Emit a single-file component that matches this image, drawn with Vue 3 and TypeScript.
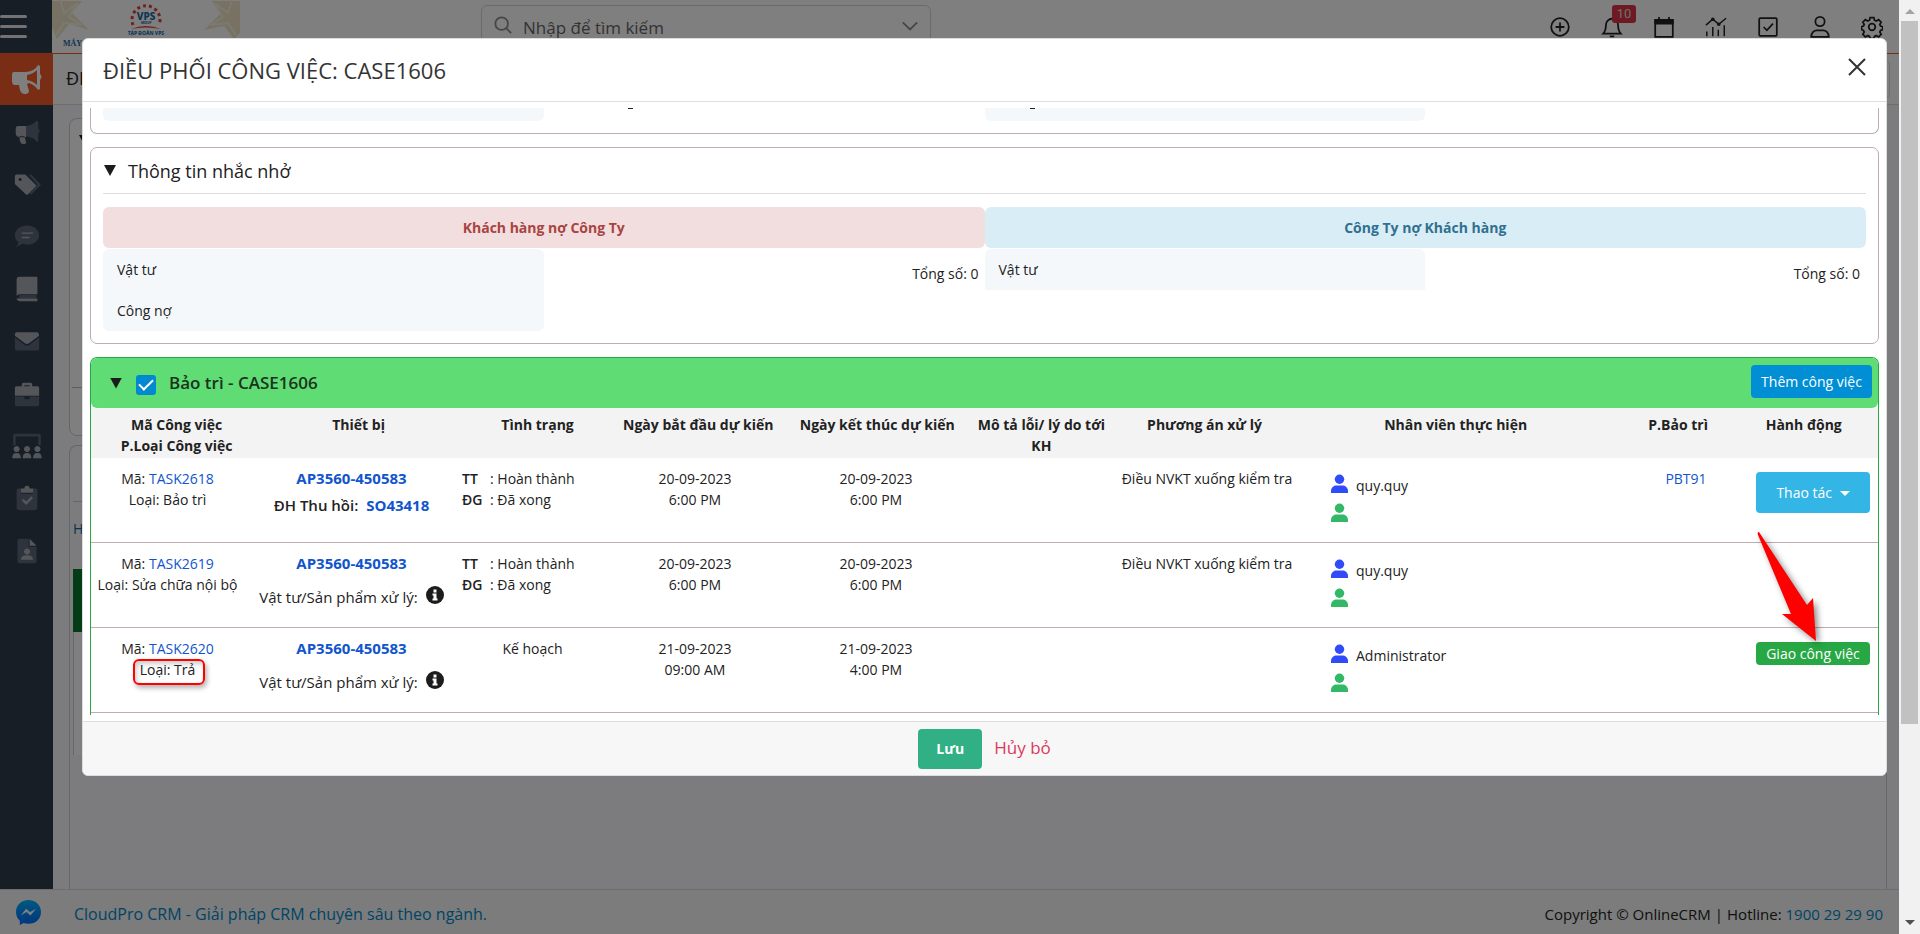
<script setup lang="ts">
import { ref } from 'vue'

interface Task {
  code: string
  kind: string
  device: string
  recall?: string
  state: string
  rated?: string
  start: string[]
  end: string[]
  plan: string
  staff: string
  slip?: string
  action?: 'menu' | 'assign'
}

const tasks: Task[] = [
  { code: 'TASK2618', kind: 'Bảo trì', device: 'AP3560-450583', recall: 'SO43418', state: 'Hoàn thành', rated: 'Đã xong', start: ['20-09-2023', '6:00 PM'], end: ['20-09-2023', '6:00 PM'], plan: 'Điều NVKT xuống kiểm tra', staff: 'quy.quy', slip: 'PBT91', action: 'menu' },
  { code: 'TASK2619', kind: 'Sửa chữa nội bộ', device: 'AP3560-450583', state: 'Hoàn thành', rated: 'Đã xong', start: ['20-09-2023', '6:00 PM'], end: ['20-09-2023', '6:00 PM'], plan: 'Điều NVKT xuống kiểm tra', staff: 'quy.quy' },
  { code: 'TASK2620', kind: 'Trả', device: 'AP3560-450583', state: 'Kế hoạch', start: ['21-09-2023', '09:00 AM'], end: ['21-09-2023', '4:00 PM'], plan: '', staff: 'Administrator', action: 'assign' },
]

const heads = ['Mã Công việc P.Loại Công việc', 'Thiết bị', 'Tình trạng', 'Ngày bắt đầu dự kiến', 'Ngày kết thúc dự kiến', 'Mô tả lỗi/ lý do tới KH', 'Phương án xử lý', 'Nhân viên thực hiện', 'P.Bảo trì', 'Hành động']

/* Two-tone glyphs: "a" is the bright layer, "b" the dim one. */
const navIcons = [
  { name: 'Chiến dịch', a: 'M4 8h10v13H7a5 5 0 0 1-5-3v-7q0-3 2-3zM6 20h6l2 7q0 2-3 2-3 0-4-3z', b: 'M14 8q8-1 12-6 2 0 2 2v7q3 2 0 6v9q-1 1-2 0-4-5-12-6z' },
  { name: 'Nhãn', a: 'M1 6q0-2 2-2h10l12 12q1 1 0 2l-9 9q-1 1-2 0L1 15zM7 8a1.800 1.800 0 1 0 .1 0z', b: 'M17 4h3l11 12-11 11-2-1 9-10z' },
  { name: 'Trao đổi', a: 'M9 11h13v1.500H9zM9 16h9v1.500H9z', b: 'M15 3c8 0 14 5 14 11s-6 11-14 11l-5-1-8 4q3-3 3-6c-3-2-4-5-4-8C1 8 7 3 15 3z' },
  { name: 'Tài liệu', a: 'M6 1h20q1 0 1 1v19H7q-4 0-4 3V5q0-4 3-4zM7 26h20v3H7q-4 0-4-4 0 1 4 1z', b: 'M6 22h20v4H6z' },
  { name: 'Thư', a: 'M3 5h24q2 1 2 4L17 18q-2 1-4 0L1 9q0-4 2-4z', b: 'M1 11l12 9q2 1 4 0l12-9v13q0 2-2 2H3q-2 0-2-2z' },
  { name: 'Công việc', a: 'M9 6V4q0-2 2-2h8q2 0 2 2v2h6q2 0 2 2v9H1V8q0-2 2-2zM12 6h6V5h-6z', b: 'M1 18h11v3h6v-3h11v9q0 2-2 2H3q-2 0-2-2z' },
  { name: 'Nhóm', a: 'M3 15a3.500 3.500 0 1 0 .1 0zM15 15a3.500 3.500 0 1 0 .1 0zM27 15a3.500 3.500 0 1 0 .1 0zM-2 29q0-6 5-6t5 6zM10 29q0-6 5-6t5 6zM22 29q0-6 5-6t5 6z', b: 'M-1 14V3q0-2 2-2h28q2 0 2 2v11h-3V4H2v10z' },
  { name: 'Kiểm tra', a: 'M8 9V4h4a3 3 0 0 1 6 0h4v5zM9 18l2-2 3 3 6-6 2 2-8 8z', b: 'M5 4h3v6h14V4h3q2 0 2 2v20q0 3-3 3H6q-3 0-3-3V6q0-2 2-2z' },
  { name: 'Hồ sơ', a: 'M18 1l8 8h-8zM15 12a3.500 3.500 0 1 0 .1 0zM8 25q0-5 7-5t7 5z', b: 'M6 1h11v9h9v17q0 2-2 2H6q-2 0-2-2V3q0-2 2-2z' },
]

const checked = ref(true)
const keyword = ref('')
</script>

<template>
  <div class="shell">
    <div class="page">
      <header class="topbar">
        <button class="burger" aria-label="Menu"><i></i><i></i><i></i></button>
        <svg class="logo" viewBox="0 0 188 52" aria-label="VPS Group">
          <rect width="188" height="52" fill="#fff" />
          <g fill="#eee5c8">
            <path d="M0 1h30L20 13l17 17-20-6-12 15-5-12z" />
            <path d="M188 1h-28l8 13-16 16 20-4 10 13 6-6z" />
          </g>
          <path d="M8 0l4 13 14-10-9 14 12 8-17-2-8 12" fill="none" stroke="#f8f3e2" stroke-width="2" />
          <path d="M180 0l-4 13-14-10 9 14-12 8 17-2 8 12" fill="none" stroke="#f8f3e2" stroke-width="2" />
          <path d="M81 25a14 14 0 1 1 26 0" fill="none" stroke="#d8424a" stroke-width="3" stroke-dasharray="3 3" />
          <text x="94" y="20" class="l-vps">VPS</text>
          <text x="94" y="24" class="l-tiny">GROUP</text>
          <path d="M79 29q15-6 30 0-15-3-30 0z" fill="#e04040" />
          <text x="94" y="35" class="l-sub">TẬP ĐOÀN VPS</text>
          <text x="11" y="46" class="l-may">MÁY</text>
        </svg>
        <label class="search">
          <svg viewBox="0 0 20 20"><circle cx="8.500" cy="8.500" r="7" /><path d="M13.500 13.500l5.500 5.500" /></svg>
          <input v-model="keyword" type="text" placeholder="Nhập để tìm kiếm" aria-label="Tìm kiếm" />
          <svg viewBox="0 0 20 20"><path d="M2 7l8 8 8-8" /></svg>
        </label>
        <nav class="tools" aria-label="Công cụ">
          <button aria-label="Thêm"><svg viewBox="0 0 20 20"><circle cx="10" cy="10" r="8" /><path d="M10 6v8M6 10h8" /></svg></button>
          <button aria-label="Thông báo"><svg viewBox="0 0 20 20"><path d="M2 16c2-2 2.500-4 2.500-8a5.500 5.500 0 0 1 11 0c0 4 .5 6 2.500 8zM8 18.500h4" /></svg><b class="badge">10</b></button>
          <button aria-label="Lịch"><svg viewBox="0 0 20 20"><path d="M2 3.500h16v15.500H2zM5.500 1v3M14.500 1v3" /><path d="M2 3.500h16V7H2z" fill="#222" /></svg></button>
          <button aria-label="Báo cáo"><svg viewBox="0 0 24 22"><path d="M2 21v-5M8.500 21V11M14.500 21v-7M21 21V9M1 9l7.500-6.500L15 8l8-6.500" /><circle cx="8.500" cy="2.500" r="1.200" /><circle cx="15" cy="8" r="1.200" /></svg></button>
          <button aria-label="Công việc"><svg viewBox="0 0 20 20"><rect x="2" y="2" width="16" height="16" rx="1" /><path d="M6 10l3 3 5.500-6" /></svg></button>
          <button aria-label="Tài khoản"><svg viewBox="0 0 20 20"><circle cx="10" cy="5" r="4.200" /><path d="M2 19c0-4 3-6 5-6h6c2 0 5 2 5 6z" /></svg></button>
          <button aria-label="Cài đặt"><svg viewBox="0 0 20 20"><circle cx="10" cy="10" r="3" /><path d="M8.300 1.500h3.400l.6 2.300 1.500.7 2.200-1.200 2.300 2.300-1.200 2.200.7 1.400 1.900.6v2.600l-1.900.7-.7 1.500 1.200 2.100-2.300 2.300-2.200-1.200-1.500.7-.6 2H8.300l-.6-2-1.500-.7L4 19l-2.300-2.300 1.200-2.100-.7-1.500-1.700-.7V9.800l1.700-.6.7-1.400-1.200-2.200L4 3.300l2.200 1.200 1.500-.7z" /></svg></button>
        </nav>
      </header>

      <div class="middle">
        <nav class="sidebar" aria-label="Mục chính">
          <div class="navlist">
            <a href="#" class="on" aria-label="Tiếp thị">
              <svg viewBox="0 0 32 32"><path d="M3 9h12q9-1 12-7l2 1v8q3 2 0 6v9l-2 1q-3-5-9-7l-2 1 2 7q0 3-4 3-4 0-5-4l-1-5H3q-2-1-2-4v-6q0-3 2-3z" fill="#fff" /><path d="M26 7v15q-4-4-10-5v-5q6-1 10-5z" fill="#f15a29" /></svg>
            </a>
            <a v-for="n in navIcons" :key="n.name" href="#" :aria-label="n.name">
              <svg viewBox="-2 0 34 30"><path :d="n.b" fill="#5c677a" /><path :d="n.a" fill="#a8adb5" fill-rule="evenodd" /></svg>
            </a>
          </div>
        </nav>
        <main class="content">
          <div class="titlebar"><span>ĐI</span><i></i></div>
          <section class="card first"><span class="caret"></span><div class="foot"></div></section>
          <section class="card second">
            <div class="strip"></div>
            <a href="#">H</a>
            <div class="greenbar"></div>
            <div class="blank"></div>
          </section>
        </main>
      </div>

      <footer class="pagefoot">
        <svg viewBox="0 0 26 26"><defs><linearGradient id="mg" x1="0" y1="0" x2="0" y2="1"><stop offset="0" stop-color="#00b2ff" /><stop offset="1" stop-color="#006aff" /></linearGradient></defs><path d="M13 0C5.500 0 0 5.400 0 12.500c0 3.700 1.500 6.900 4 9.100V26l3.800-2.100c1.600.5 3.400.8 5.200.8 7.500 0 13-5.200 13-12.300S20.500 0 13 0z" fill="url(#mg)" /><path d="M5 16l5.500-7 4 3.500L21 9l-6 7-4-3.500z" fill="#fff" /></svg>
        <a href="#" class="product">CloudPro CRM - Giải pháp CRM chuyên sâu theo ngành.</a>
        <p>Copyright © OnlineCRM<span>|</span>Hotline: <a href="#">1900 29 29 90</a></p>
      </footer>

      <div class="overlay">
        <div class="modal" role="dialog" aria-labelledby="dlg-title">
          <header class="m-head">
            <h1 id="dlg-title">ĐIỀU PHỐI CÔNG VIỆC: CASE1606</h1>
            <button aria-label="Đóng"><svg viewBox="0 0 16 16"><path d="M0 0l16 16M16 0L0 16" /></svg></button>
          </header>

          <div class="m-body">
            <section class="panel clipped">
              <div class="fields"><div class="tint"></div><div class="rest"><i></i></div></div>
              <div class="fields"><div class="tint"><i></i></div><div class="rest"></div></div>
            </section>

            <section class="panel remind">
              <h2><span class="caret"></span>Thông tin nhắc nhở</h2>
              <div class="debts">
                <div class="debt">
                  <h3 class="red">Khách hàng nợ Công Ty</h3>
                  <div class="pair"><span class="name top">Vật tư</span><span class="sum">Tổng số: 0</span></div>
                  <div class="pair"><span class="name bottom">Công nợ</span><span class="sum"></span></div>
                </div>
                <div class="debt">
                  <h3 class="blue">Công Ty nợ Khách hàng</h3>
                  <div class="pair"><span class="name top">Vật tư</span><span class="sum">Tổng số: 0</span></div>
                </div>
              </div>
            </section>

            <section class="panel job">
              <div class="bar">
                <span class="caret"></span>
                <input id="case" v-model="checked" type="checkbox" />
                <label for="case">Bảo trì - CASE1606</label>
                <button class="add">Thêm công việc</button>
              </div>
              <table>
                <thead>
                  <tr><th v-for="h in heads" :key="h" scope="col">{{ h }}</th></tr>
                </thead>
                <tbody>
                  <tr v-for="t in tasks" :key="t.code">
                    <td>
                      <div>Mã: <a href="#">{{ t.code }}</a></div>
                      <div :class="{ marked: t.kind === 'Trả' }">Loại: {{ t.kind }}</div>
                    </td>
                    <td class="device">
                      <a href="#">{{ t.device }}</a>
                      <div v-if="t.recall" class="recall">ĐH Thu hồi: <a href="#">{{ t.recall }}</a></div>
                      <div v-else class="parts">Vật tư/Sản phẩm xử lý:
                        <svg viewBox="0 0 18 18"><circle cx="9" cy="9" r="9" /><path d="M7.500 3.500h3v3h-3zM6.500 7.500h4v5h1v2h-5v-2h1v-3h-1z" fill="#fff" /></svg>
                      </div>
                    </td>
                    <td>
                      <dl v-if="t.rated"><dt>TT</dt><dd>: {{ t.state }}</dd><dt>ĐG</dt><dd>: {{ t.rated }}</dd></dl>
                      <template v-else>{{ t.state }}</template>
                    </td>
                    <td><div v-for="s in t.start" :key="s">{{ s }}</div></td>
                    <td><div v-for="s in t.end" :key="s">{{ s }}</div></td>
                    <td></td>
                    <td>{{ t.plan }}</td>
                    <td class="staff">
                      <div><svg viewBox="0 0 18 20" class="lead"><circle cx="9" cy="5.500" r="5" /><path d="M0 20v-2c0-4 3-6 6-6h6c3 0 6 2 6 6v2z" /></svg>{{ t.staff }}</div>
                      <div><svg viewBox="0 0 18 20" class="mate"><circle cx="9" cy="5.500" r="5" /><path d="M0 20v-2c0-4 3-6 6-6h6c3 0 6 2 6 6v2z" /></svg></div>
                    </td>
                    <td class="slip"><a v-if="t.slip" href="#">{{ t.slip }}</a></td>
                    <td class="act">
                      <button v-if="t.action === 'menu'" class="menu">Thao tác <i></i></button>
                      <button v-if="t.action === 'assign'" class="assign">Giao công việc</button>
                      <svg v-if="t.action === 'assign'" class="arrow" viewBox="0 0 66 114"><path d="M3 1q-2 0-1 3l33 79-9 0 34 27-3-43-6 7z" /></svg>
                    </td>
                  </tr>
                </tbody>
              </table>
            </section>
          </div>

          <footer class="m-foot">
            <button class="save">Lưu</button>
            <a href="#">Hủy bỏ</a>
          </footer>
        </div>
      </div>
    </div>

    <div class="scroll" aria-hidden="true"><i class="up"></i><b></b><i class="down"></i></div>
  </div>
</template>

<style>
body { margin: 0; overflow: hidden; }
</style>

<style scoped>
.shell { display: flex; height: 100vh; font: 14px/21px "Open Sans", "Noto Sans", sans-serif; color: #222; }
.shell * { box-sizing: border-box; }
button { font: inherit; border: 0; background: none; padding: 0; }
a { text-decoration: none; color: #1155cc; }
h1, h2, h3, p, dl, dd { margin: 0; }
svg { display: block; flex: none; }
.caret { width: 12px; height: 11px; background: #1c1c1c; clip-path: polygon(0 0, 100% 0, 50% 100%); flex: none; }

.page { flex: 1; min-width: 0; display: flex; flex-direction: column; position: relative; background: #f8f9fc; }

.topbar { height: 54px; display: flex; background: #fff; border-bottom: 1px solid #f15a29; flex: none; }
.burger { width: 52px; background: #2e3c4d; display: flex; flex-direction: column; gap: 7px; padding: 15px 25px 0 0; align-items: stretch; }
.burger i { height: 3px; border-radius: 2px; background: #e6e6ea; }
.logo { width: 188px; height: 52px; }
.logo text { font-family: "Noto Sans", sans-serif; font-weight: 800; fill: #1c6aa8; text-anchor: middle; }
.logo .l-vps { font-size: 10px; }
.logo .l-tiny { font-size: 3px; }
.logo .l-sub { font-size: 5px; }
.logo .l-may { font: bold 8px "Liberation Serif", serif; text-anchor: start; }
.search { width: 450px; height: 44px; margin: 5px 0 0 241px; border: 1px solid #d5d5d5; border-radius: 6px; display: flex; align-items: flex-start; padding: 10px 11px 0 12px; gap: 11px; }
.search svg { width: 18px; height: 18px; fill: none; stroke: #8c8c8c; stroke-width: 2; }
.search input { flex: 1; min-width: 0; border: 0; background: none; padding: 0; height: 23px; font: 17px/23px "Open Sans", sans-serif; outline: 0; }
.search input::placeholder { color: #666; opacity: 1; }
.tools { margin-left: auto; display: flex; padding: 16px 16px 0 0; gap: 30px; }
.tools button { width: 22px; height: 22px; position: relative; }
.tools svg { width: 22px; height: 22px; fill: none; stroke: #222; stroke-width: 1.6; }
.badge { position: absolute; left: 11px; top: -11px; width: 24px; height: 18px; border-radius: 3px; background: #dc3545; color: #ddd; font: 13px/18px Roboto, sans-serif; }

.middle { flex: 1; display: flex; min-height: 0; }
.sidebar { width: 53px; margin-top: -1px; background: #2e3c4d; flex: none; }
.navlist { height: 524px; display: grid; grid-template-rows: repeat(10, 1fr); }
.sidebar a { display: grid; place-items: center; }
.sidebar svg { width: 30px; height: 26px; }
.sidebar .on { background: #f15a29; }
.sidebar .on svg { width: 32px; height: 32px; }
.content { flex: 1; display: flex; flex-direction: column; }
.titlebar { height: 51px; flex: none; background: #fff; border-bottom: 1px solid #ddd; padding: 6px 9px 0 13px; display: flex; font: 18px/36px "Open Sans", sans-serif; }
.titlebar i { margin-left: auto; width: 60px; height: 38px; border: 1px solid #ddd; border-radius: 4px; }
.card { margin: 0 12px 9px 16px; border: 1px solid #ccc; border-radius: 8px; }
.first { margin-top: 13px; height: 318px; background: #fff; padding: 16px 2px 0; display: flex; flex-direction: column; flex: none; }
.first .caret { margin-left: 7px; }
.first .foot { margin-top: auto; height: 48px; border-top: 1px solid #bbb; }
.second { flex: 1; margin-bottom: 0; border-bottom: 0; border-radius: 8px 8px 0 0; padding: 0 3px; }
.second .strip { height: 56px; border-bottom: 1px solid #ccc; }
.second a { display: block; line-height: 20px; padding: 17px 0 16px; color: #0a6aa1; }
.greenbar { height: 63px; margin-top: 14px; background: #087a2a; }
.blank { height: 123px; border-left: 1px solid #ccc; background: #fff; }

.pagefoot { height: 45px; flex: none; border-top: 1px solid #d8dad8; background: #f7f9f7; display: flex; align-items: center; padding: 4px 16px 0; font-size: 15px; }
.pagefoot svg { width: 25px; height: 25px; margin-right: 33px; margin-bottom: 4px; }
.pagefoot a { color: #0088cc; }
.pagefoot .product { font-size: 16px; }
.pagefoot p { margin-left: auto; }
.pagefoot span { padding: 0 4px; }

.overlay { position: absolute; inset: 0; background: rgba(0, 0, 0, 0.5); padding: 38px 12px 0 82px; }
.modal { background: #fff; border: 1px solid #ddd; border-radius: 6px; overflow: hidden; }
.m-head { height: 63px; border-bottom: 1px solid #ddd; display: flex; align-items: center; justify-content: space-between; padding: 0 21px 0 20px; }
.m-head h1 { font-size: 22px; line-height: 28px; font-weight: 400; color: #333; }
.m-head svg { width: 16px; height: 16px; fill: none; stroke: #333; stroke-width: 2; overflow: visible; }
.m-head button { margin-bottom: 6px; }
.m-body { padding: 6px 7px; display: flex; flex-direction: column; gap: 13px; }
.panel { border: 1px solid #bfabb0; border-radius: 7px; }
.clipped { height: 26px; border-top: 0; border-radius: 0 0 7px 7px; padding: 0 12px; display: flex; }
.fields { flex: 1; display: flex; height: 13px; }
.fields > div { flex: 1; }
.fields i { display: block; width: 5px; height: 1px; background: #222; margin-left: 84px; }
.tint { background: #f4f8fb; border-radius: 0 0 6px 6px; }
.fields .tint i { margin-left: 45px; }

.remind { padding: 0 12px 12px; }
.remind h2 { height: 46px; border-bottom: 1px solid #ddd; display: flex; align-items: center; gap: 12px; font-size: 18px; line-height: 24px; font-weight: 400; margin-bottom: 13px; padding-left: 1px; color: #222; }
.debts { display: flex; }
.debt { flex: 1; }
.debt h3 { height: 41px; border-radius: 6px; text-align: center; font-size: 14px; line-height: 41px; font-weight: 700; margin-bottom: 1px; }
.red { background: #f2dede; color: #a94442; }
.blue { background: #d9edf7; color: #31708f; }
.pair { display: flex; }
.pair > span { width: 50%; height: 41px; line-height: 41px; }
.pair .name { background: #f4f8fb; padding-left: 14px; }
.pair .top { border-radius: 6px 6px 0 0; }
.pair .bottom { border-radius: 0 0 6px 6px; }
.pair .sum { text-align: right; padding: 4px 6px 0 0; }

.job { border-color: #28a745; border-bottom: 0; border-radius: 7px 7px 0 0; padding-bottom: 2px; }
.bar { height: 50px; background: #5fdc74; border-radius: 6px; display: flex; align-items: center; padding: 0 6px 0 19px; color: #1b331e; }
.bar input { appearance: none; width: 20px; height: 20px; border-radius: 3px; margin: 3px 13px 0 14px; background: #0088d0; display: grid; place-items: center; }
.bar input:checked::after { content: ""; width: 6px; height: 12px; border: solid #fff; border-width: 0 2px 2px 0; transform: rotate(45deg); margin-bottom: 3px; }
.bar label { font-size: 17px; line-height: 24px; font-weight: 600; }
.add { margin: 0 0 3px auto; width: 121px; height: 33px; border-radius: 4px; background: #008fd5; color: #fff; }

table { display: block; }
thead, tbody { display: block; }
tr { display: grid; grid-template-columns: 153fr 215fr 147fr 178fr 184fr 148fr 182fr 326fr 124fr 130fr; }
thead tr { background: #f3f3f3; padding: 6px 10px 2px; height: 50px; }
th { padding: 0; font-weight: 700; text-align: center; }
th:first-child { padding: 0 14px; }
tbody tr { height: 85px; border-bottom: 1px solid #bfabb0; padding-top: 10px; }
td { padding: 0; text-align: center; white-space: nowrap; }
.device { font-size: 15px; font-weight: 600; }
.device > a, .recall a { font-weight: 700; }
.device div { margin-top: 6px; }
.device .recall { font-size: 15px; }
.recall a { margin-left: 4px; }
.parts { display: flex; justify-content: center; align-items: center; gap: 8px; padding-top: 6px; font-weight: 400; }
.parts svg { width: 18px; height: 18px; fill: #1c1c1c; margin-bottom: 4px; }
dl { display: grid; grid-template-columns: 28px auto; justify-content: start; text-align: left; padding-left: 3px; }
dt { font-weight: 600; }
.staff { padding-left: 33px; }
.staff div { display: flex; align-items: center; gap: 8px; height: 29px; padding-top: 6px; }
.staff svg { width: 17px; height: 19px; margin-bottom: 4px; }
.lead { fill: #2f4bfa; }
.mate { fill: #32b866; }
.act { position: relative; }
.menu { width: 114px; height: 41px; margin-top: 4px; border-radius: 4px; background: #33b5e5; color: #fff; }
.menu i { display: inline-block; border: 5px solid transparent; border-top-color: #fff; border-bottom: 0; margin: 0 0 2px 4px; }
.assign { width: 114px; height: 23px; margin-top: 4px; border-radius: 4px; background: #28a745; color: #fff; }
.arrow { position: absolute; width: 66px; height: 114px; left: 8px; top: -107px; fill: #f00; filter: drop-shadow(3px 3px 3px rgba(0, 0, 0, 0.45)); }
.marked { position: relative; }
.marked::after { content: ""; position: absolute; left: 42px; top: 0; width: 68px; height: 22px; border: 2px solid #f00; border-radius: 6px; box-shadow: 2px 3px 5px rgba(0, 0, 0, 0.3), inset 2px 3px 5px rgba(0, 0, 0, 0.2); }

.m-foot { height: 54px; border-top: 1px solid #ddd; background: #f7f7f7; display: flex; justify-content: center; align-items: center; gap: 12px; }
.save { width: 64px; height: 40px; border-radius: 4px; background: #31b085; color: #fff; font-weight: 700; }
.m-foot a { color: #dc3a5c; font-size: 17px; padding-bottom: 2px; }

.scroll { width: 21px; background: #f1f1f1; padding: 9px 2px 9px; display: flex; flex-direction: column; align-items: center; flex: none; }
.scroll b { width: 17px; flex: 0 1 703px; background: #c1c1c1; margin-top: 7px; }
.scroll i { border: 5px solid transparent; }
.scroll .up { border-top: 0; border-bottom-color: #a3a3a3; }
.scroll .down { margin-top: auto; border-bottom: 0; border-top-color: #505050; }
</style>
